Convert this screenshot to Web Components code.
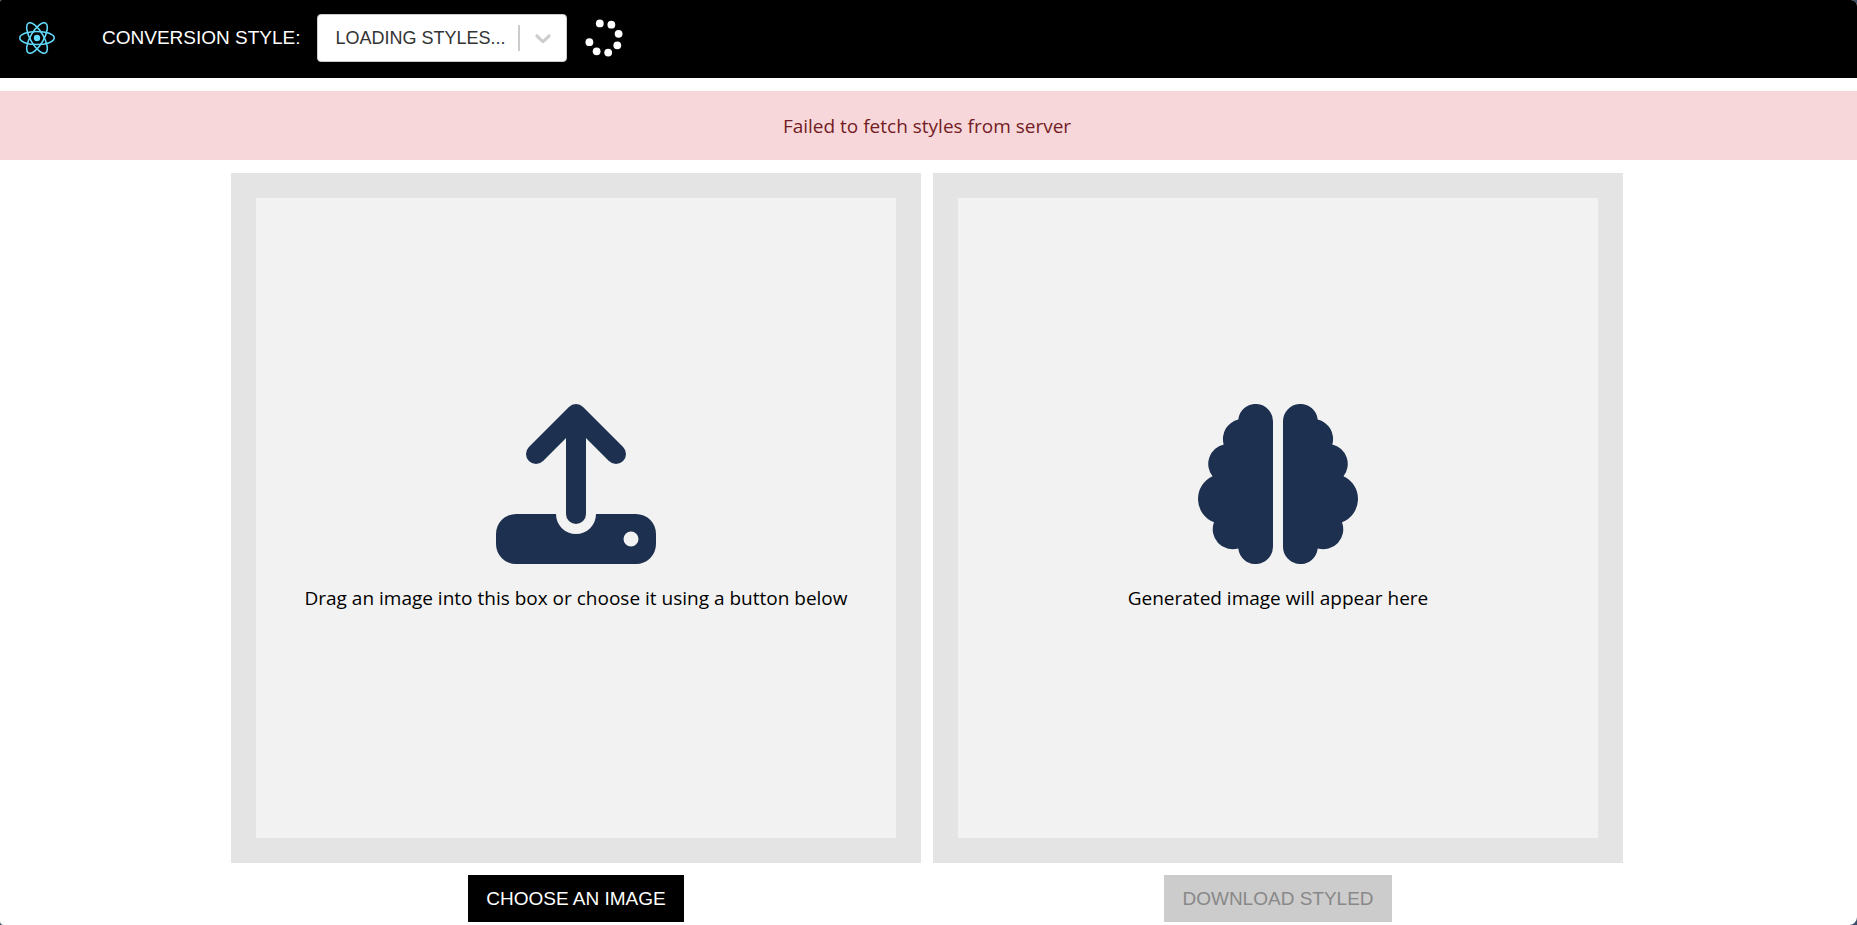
<!DOCTYPE html>
<html lang="en">
<head>
<meta charset="utf-8">
<title>Image style conversion</title>
<style>
  html { background: #3c4f68; }
  body { margin: 0; font-family: "Open Sans", "Segoe UI", sans-serif; color: #000; }
</style>
</head>
<body>
<style-app></style-app>
<script>
const define = (name, html, setup) => customElements.define(name, class extends HTMLElement {
  connectedCallback() {
    if (this.shadowRoot) return;
    const t = document.createElement('template');
    t.innerHTML = html;
    this.attachShadow({ mode: 'open' }).append(t.content.cloneNode(true));
    if (setup) setup(this, this.shadowRoot);
  }
});

define('react-logo', `
<style>:host { display: block; width: 36px; height: 32px; } svg { display: block; width: 100%; height: 100%; }</style>
<svg viewBox="-11.5 -10.23 23 20.46" fill="none" stroke="#61dafb" aria-hidden="true">
  <circle r="2.05" fill="#61dafb" stroke="none"/>
  <ellipse rx="11" ry="4.2"/>
  <ellipse rx="11" ry="4.2" transform="rotate(60)"/>
  <ellipse rx="11" ry="4.2" transform="rotate(120)"/>
</svg>`);

define('dot-spinner', `
<style>:host { display: block; width: 38px; height: 38px; } svg { display: block; width: 100%; height: 100%; }</style>
<svg viewBox="-19 -19 38 38" fill="#fff" role="img" aria-label="Loading"></svg>`, (el, root) => {
  const svg = root.querySelector('svg');
  for (let i = 0; i < 7; i++) {
    const a = (-106 + i * 45) * Math.PI / 180;
    const c = document.createElementNS('http://www.w3.org/2000/svg', 'circle');
    c.setAttribute('cx', 15.2 * Math.cos(a));
    c.setAttribute('cy', 15.2 * Math.sin(a));
    c.setAttribute('r', 3.9);
    svg.append(c);
  }
});

define('style-select', `
<style>
  :host { display: flex; align-items: center; gap: 16px; font-family: "Liberation Sans", Arial, sans-serif; }
  label { font-size: 19px; line-height: 24px; color: #fff; white-space: nowrap; }
  .control { display: grid; width: 250px; height: 48px; box-sizing: border-box; background: #fff; border: 1px solid #ccc; border-radius: 4px; }
  select { grid-area: 1 / 1; appearance: none; margin: 0; padding: 0 50px 0 18px; border: 0; background: none; font: inherit; font-size: 18px; color: #333; opacity: 1; min-width: 0; }
  .indicators { grid-area: 1 / 1; justify-self: end; display: flex; align-items: center; gap: 10px; padding-right: 10px; pointer-events: none; }
  .bar { width: 2px; height: 26px; background: #ccc; }
  svg { width: 26px; height: 26px; fill: #ccc; }
</style>
<label for="s"><slot></slot></label>
<div class="control">
  <select id="s" disabled><option>LOADING STYLES...</option></select>
  <div class="indicators"><span class="bar"></span>
    <svg viewBox="0 0 20 20" aria-hidden="true"><path d="M4.516 7.548c0.436-0.446 1.043-0.481 1.576 0l3.908 3.747 3.908-3.747c0.533-0.481 1.141-0.446 1.574 0 0.436 0.445 0.408 1.197 0 1.615-0.406 0.418-4.695 4.502-4.695 4.502-0.217 0.223-0.502 0.335-0.787 0.335s-0.57-0.112-0.789-0.335c0 0-4.287-4.084-4.695-4.502s-0.436-1.17 0-1.615z"/></svg>
  </div>
</div>`);

define('top-bar', `
<style>
  :host { display: flex; align-items: center; height: 78px; padding: 0 19px 2px; box-sizing: border-box; background: #000; }
  style-select { margin: 0 18px 0 47px; }
</style>
<react-logo></react-logo>
<style-select>CONVERSION STYLE:</style-select>
<dot-spinner></dot-spinner>`);

define('alert-banner', `
<style>:host { display: block; padding: 21px 3px 19px 0; font-size: 19px; line-height: 29px; text-align: center; background: #f8d7da; color: #721c24; }</style>
<slot></slot>`);

define('upload-icon', `
<style>:host { display: block; width: 160px; height: 160px; } svg { display: block; width: 100%; height: 100%; }</style>
<svg viewBox="0 0 160 160" aria-hidden="true">
  <path d="M80 10V110M40 50L80 10L120 50" fill="none" stroke="#1e3050" stroke-width="20" stroke-linecap="round" stroke-linejoin="round"/>
  <path fill="#1e3050" fill-rule="evenodd" d="M20 110H60A20 20 0 0 0 100 110H140A20 20 0 0 1 160 130V140A20 20 0 0 1 140 160H20A20 20 0 0 1 0 140V130A20 20 0 0 1 20 110ZM127.5 135a7.5 7.5 0 1 0 15 0a7.5 7.5 0 1 0 -15 0Z"/>
</svg>`);

define('brain-icon', `
<style>:host { display: block; width: 160px; height: 160px; } svg { display: block; width: 100%; height: 100%; }</style>
<svg viewBox="0 0 160 160" fill="#1e3050" aria-hidden="true">
  <defs><path id="half" d="M75 17.5A17.4 17.4 0 0 0 40.3 15.5A20 20 0 0 0 25.7 40.5A20 20 0 0 0 14.5 72.3A25 25 0 0 0 16 118.3A20 20 0 0 0 40.3 144.5A17.4 17.4 0 0 0 75 142.5Z"/></defs>
  <use href="#half"/><use href="#half" transform="translate(160) scale(-1 1)"/>
</svg>`);

define('image-panel', `
<style>
  :host { display: flex; flex-direction: column; align-items: center; gap: 12px; flex: 0 1 690px; min-width: 0; }
  .frame { width: 100%; aspect-ratio: 1; box-sizing: border-box; border: 25px solid #e4e4e4; background: #f2f2f2; display: flex; flex-direction: column; align-items: center; justify-content: center; }
  p { margin: 20px 0; font-size: 19px; line-height: 28px; text-align: center; }
</style>
<div class="frame"><slot name="icon"></slot><p><slot></slot></p></div>
<slot name="action"></slot>`);

define('action-button', `
<style>
  :host { display: block; }
  button { display: block; margin: 0; border: 0; border-radius: 0; height: 47px; padding: 0 18px; background: #000; color: #fff; font: 19px/24px "Liberation Sans", Arial, sans-serif; white-space: nowrap; }
  button:disabled { background: #ccc; color: #888; }
</style>
<button type="button"><slot></slot></button>`, (el, root) => {
  root.querySelector('button').disabled = el.hasAttribute('disabled');
});

define('style-app', `
<style>
  :host { display: block; min-height: 100vh; background: #fff; border-radius: 2px 6px 8px 4px; overflow: hidden; }
  alert-banner { margin: 13px 0; }
  main { display: flex; justify-content: center; gap: 12px; padding-right: 3px; }
</style>
<top-bar></top-bar>
<alert-banner role="alert">Failed to fetch styles from server</alert-banner>
<main>
  <image-panel><upload-icon slot="icon"></upload-icon>Drag an image into this box or choose it using a button below<action-button slot="action">CHOOSE AN IMAGE</action-button></image-panel>
  <image-panel><brain-icon slot="icon"></brain-icon>Generated image will appear here<action-button slot="action" disabled>DOWNLOAD STYLED</action-button></image-panel>
</main>`);
</script>
</body>
</html>
